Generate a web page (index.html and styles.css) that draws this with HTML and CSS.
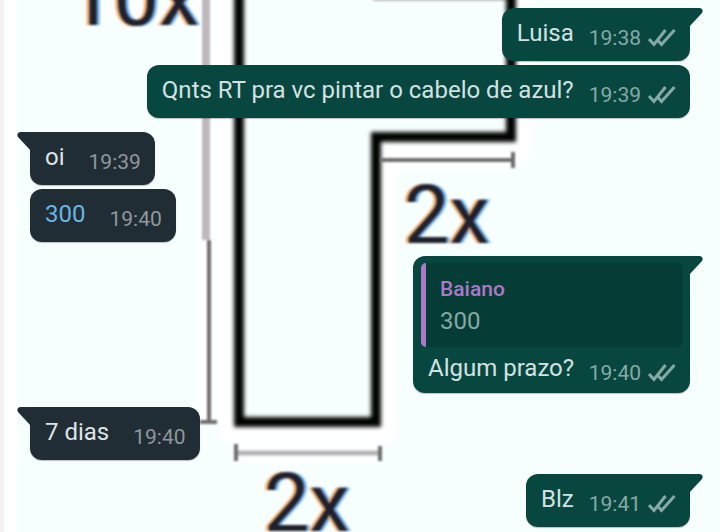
FILE: index.html
```html
<!DOCTYPE html>
<html lang="pt-BR">
<head>
<meta charset="utf-8">
<meta name="viewport" content="width=device-width, initial-scale=1">
<title>Conversa</title>
<link rel="stylesheet" href="styles.css">
</head>
<body>
<svg class="wallpaper" viewBox="0 0 720 532" preserveAspectRatio="xMinYMin slice">
  <rect class="edge" width="4" height="532"/>
  <rect class="margin" x="4" width="13" height="532"/>
  <g class="halo">
    <path d="M226 -10V432H388V150H524V-10M206 -10V424M238 453H380M380 160H520M92 12H198"/>
  </g>
  <path class="top-line" d="M373 -1H510"/>
  <g class="outline">
    <path d="M239 -10V422H376V137H511V-10"/>
  </g>
  <g class="rule-light">
    <path d="M206 -10V240"/>
  </g>
  <g class="rule">
    <path d="M209 240V422M200 422H217M380 160H513M513 152V168"/>
  </g>
  <g class="rule-soft">
    <path d="M236 453H380"/>
  </g>
  <g class="rule">
    <path d="M236 444V461M380 446V461"/>
  </g>
  <g class="figures">
    <text x="68" y="25">10x</text>
    <text x="404" y="243">2x</text>
    <text x="264" y="531">2x</text>
  </g>
</svg>
<svg class="symbols">
  <symbol id="checks" viewBox="0 0 28 20"><path d="M1 11 6 16.500 17.500 2M10.500 13 13.500 16.500 26.500 2"/></symbol>
  <symbol id="tail" viewBox="0 0 14 20"><path d="M0 0H11Q15 1 13 5L0 19Z"/></symbol>
</svg>
<main class="chat">
  <article class="bubble out">
    <svg class="tail"><use href="#tail"/></svg>
    <p class="text">Luisa</p>
    <span class="meta"><time>19:38</time><svg class="checks"><use href="#checks"/></svg></span>
  </article>
  <article class="bubble out grouped">
    <p class="text">Qnts RT pra vc pintar o cabelo de azul?</p>
    <span class="meta"><time>19:39</time><svg class="checks"><use href="#checks"/></svg></span>
  </article>
  <article class="bubble in">
    <svg class="tail"><use href="#tail"/></svg>
    <p class="text">oi</p>
    <span class="meta"><time>19:39</time></span>
  </article>
  <article class="bubble in grouped">
    <p class="text"><a href="tel:300">300</a></p>
    <span class="meta"><time>19:40</time></span>
  </article>
  <article class="bubble out reply">
    <svg class="tail"><use href="#tail"/></svg>
    <blockquote class="quote">
      <strong class="author">Baiano</strong>
      <span class="quoted">300</span>
    </blockquote>
    <p class="text">Algum prazo?</p>
    <span class="meta"><time>19:40</time><svg class="checks"><use href="#checks"/></svg></span>
  </article>
  <article class="bubble in">
    <svg class="tail"><use href="#tail"/></svg>
    <p class="text">7 dias</p>
    <span class="meta"><time>19:40</time></span>
  </article>
  <article class="bubble out">
    <svg class="tail"><use href="#tail"/></svg>
    <p class="text">Blz</p>
    <span class="meta"><time>19:41</time><svg class="checks"><use href="#checks"/></svg></span>
  </article>
</main>
</body>
</html>
```

FILE: styles.css
```css
* {
  box-sizing: border-box;
}

body {
  position: relative;
  min-height: 100vh;
  margin: 0;
  overflow-x: hidden;
  background: #f7fffe;
  font-family: Roboto, "Liberation Sans", sans-serif;
}

/* Geometry drawing behind the conversation */
.wallpaper {
  position: absolute;
  top: 0;
  left: 0;
  width: 100%;
  height: 100%;
  fill: none;
}

.wallpaper .edge {
  fill: #f3eff2;
}

.wallpaper .margin {
  fill: #fdffff;
}

.halo {
  stroke: #fff;
  stroke-width: 16px;
  filter: blur(4px);
}

.top-line {
  stroke: #c4bfc0;
  stroke-width: 4px;
  filter: blur(1px);
}

.outline {
  stroke: #000400;
  stroke-width: 10px;
  filter: blur(2px);
}

.rule-light {
  stroke: #bdb9bc;
  stroke-width: 8px;
  filter: blur(1px);
}

.rule {
  stroke: #6d6d6d;
  stroke-width: 4px;
  filter: blur(1px);
}

.rule-soft {
  stroke: #b4b4b4;
  stroke-width: 5px;
  filter: blur(1px);
}

.figures {
  fill: #20202c;
  font-family: Roboto, "Liberation Sans", sans-serif;
  font-size: 81px;
  filter: drop-shadow(-3px 0 0 #f3ad6c) drop-shadow(3px 0 0 #6fb2f2) blur(1px);
}

.symbols {
  position: absolute;
  width: 0;
  height: 0;
}

.chat {
  position: relative;
  display: flex;
  flex-direction: column;
  padding: 8px 30px 4px;
}

.bubble {
  position: relative;
  display: flex;
  align-items: flex-start;
  justify-content: space-between;
  margin-top: 14px;
  padding: 9px 14px 12px 15px;
  border-radius: 12px;
  font-size: 24px;
  line-height: 32px;
  box-shadow: 0 1px 1px #00000040;
}

.bubble:first-child {
  margin-top: 0;
}

.bubble.grouped {
  margin-top: 4px;
}

.out {
  align-self: flex-end;
  gap: 15px;
  background: #074740;
  color: #d3e2e0;
}

.in {
  align-self: flex-start;
  gap: 24px;
  background: #212d35;
  color: #dfe3e5;
}

.out:not(.grouped) {
  border-top-right-radius: 0;
}

.in:not(.grouped) {
  border-top-left-radius: 0;
}

.tail {
  position: absolute;
  top: 0;
  width: 14px;
  height: 20px;
}

.out .tail {
  left: calc(100% - 1px);
  fill: #074740;
}

.in .tail {
  right: calc(100% - 1px);
  fill: #212d35;
  transform: scaleX(-1);
}

.text {
  margin: 0;
}

.text a {
  color: #68b6e2;
  text-decoration: none;
}

.meta {
  display: flex;
  align-items: center;
  gap: 7px;
  height: 32px;
  padding-top: 10px;
  font-size: 21px;
  line-height: 24px;
  color: #87a9a5;
}

.in .meta {
  color: #90979c;
}

.checks {
  width: 28px;
  height: 20px;
  fill: none;
  stroke: #87a9a5;
  stroke-width: 3px;
}

.reply {
  flex-wrap: wrap;
  width: 277px;
  padding-top: 7px;
  padding-bottom: 9px;
  row-gap: 5px;
}

.reply .text {
  white-space: nowrap;
}

.reply .meta {
  margin-left: -5px;
}

.quote {
  display: flex;
  flex-direction: column;
  flex: 0 0 262px;
  margin: 0 -7px;
  padding: 10px 14px;
  border-left: 5px solid #ad78c8;
  border-radius: 5px;
  background: #053d36;
}

.author {
  color: #ad78c8;
  font-size: 21px;
  font-weight: 500;
}

.quoted {
  color: #87a9a5;
}
```
